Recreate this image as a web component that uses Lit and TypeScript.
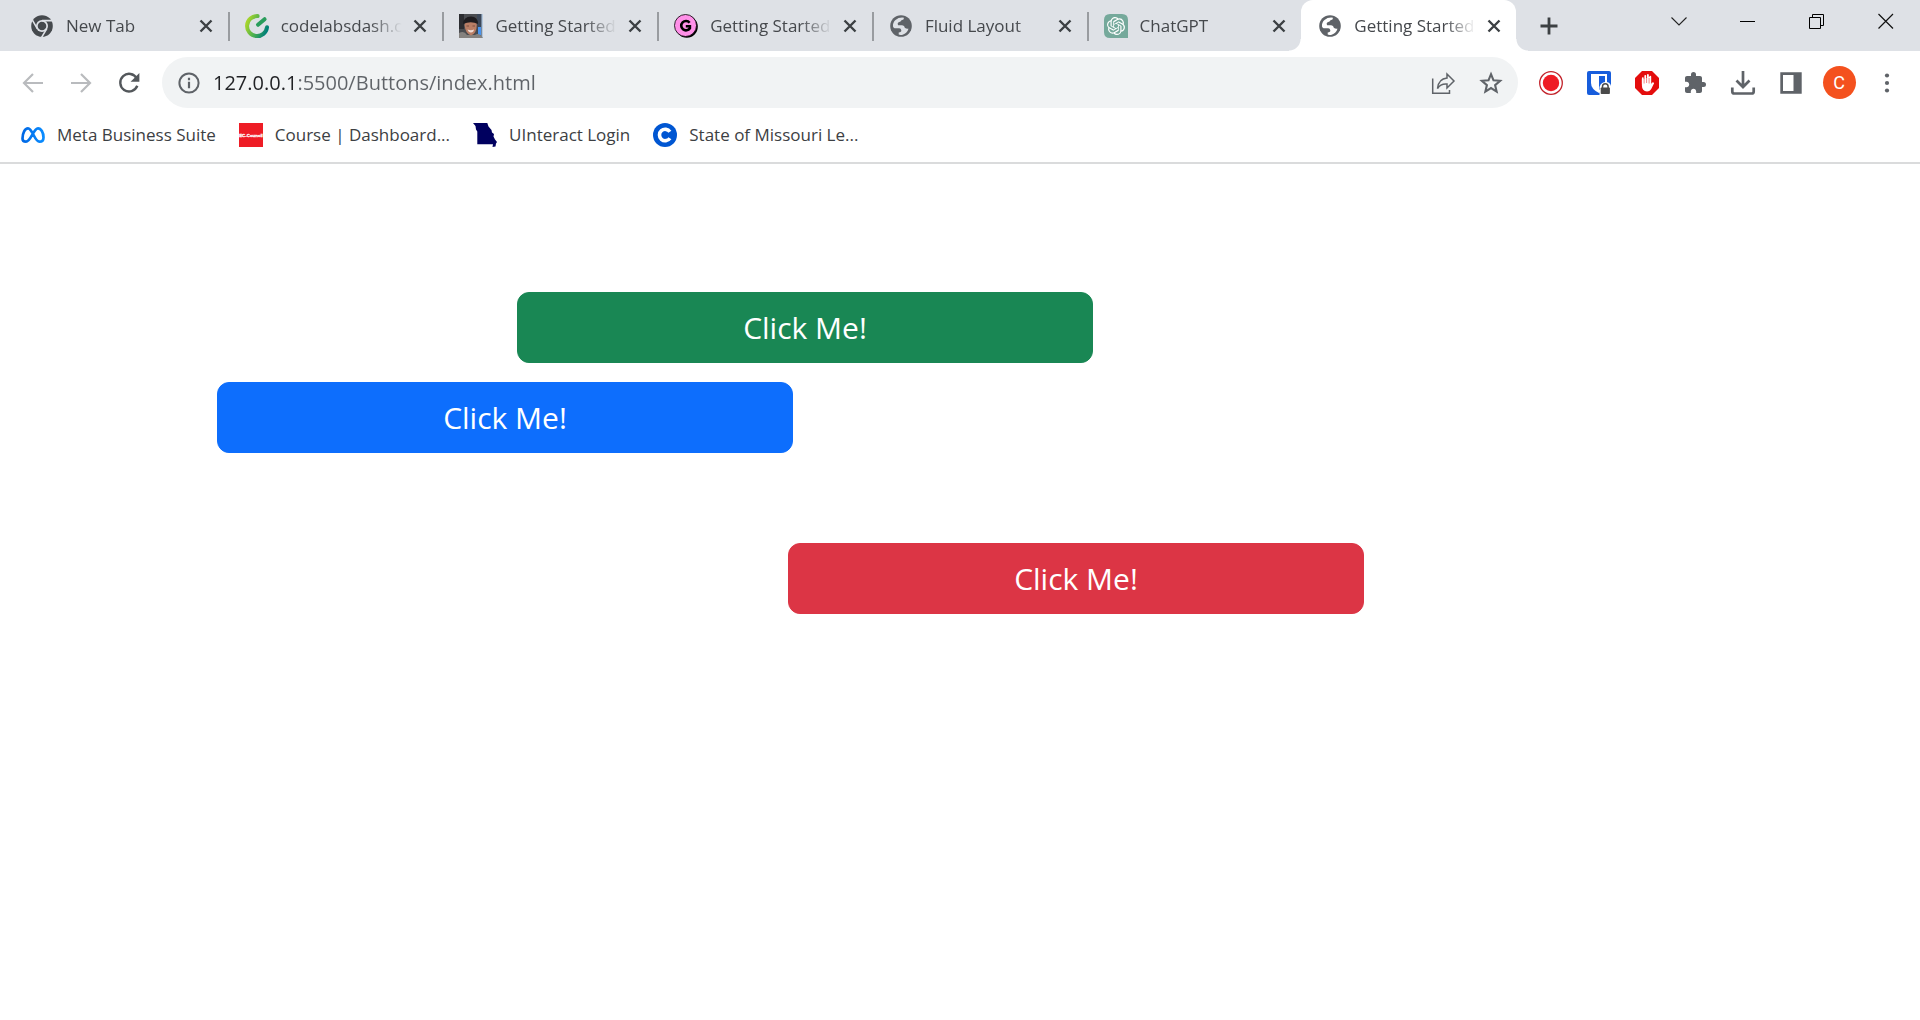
import { LitElement, html, css, svg, type TemplateResult } from "lit";
import { customElement, property, state } from "lit/decorators.js";
import { classMap } from "lit/directives/class-map.js";

type Art = ReturnType<typeof svg>;

/* Every glyph is drawn on a 24 x 24 grid. */
const art: Record<string, Art> = {
  chrome: svg`
    <circle cx="12" cy="12" r="10.8" fill="#45494d"/>
    <circle cx="12" cy="12" r="6" fill="#dee1e6"/>
    <circle cx="12" cy="12" r="4.3" fill="#45494d"/>
    <path d="M12 6.6H22M7.4 14.8L2.4 6.2M16.8 14.6L11.6 23.4" stroke="#dee1e6" stroke-width="1.6" fill="none"/>`,
  codelabs: svg`
    <defs><linearGradient id="lime" x1="0" y1="0.3" x2="1" y2="0.7">
      <stop offset="0" stop-color="#a5d42c"/><stop offset="0.5" stop-color="#4caf50"/><stop offset="1" stop-color="#008078"/>
    </linearGradient></defs>
    <path d="M12.6 2.1A10 10 0 1 0 22 13.2" fill="none" stroke="url(#lime)" stroke-width="4" stroke-linecap="round"/>
    <path d="M13 10.8L19.6 5.2" fill="none" stroke="#2a9d5c" stroke-width="4" stroke-linecap="round"/>`,
  photo: svg`
    <rect width="24" height="24" fill="#4a4c50"/>
    <rect width="5" height="15" fill="#2c2d31"/><rect x="18" width="6" height="24" fill="#3d4858"/>
    <rect x="22.500" width="1.500" height="24" fill="#b4c8de"/>
    <rect x="19" y="13" width="3" height="8" fill="#4a95ef"/>
    <path d="M0 24V19Q5 16 8 21H16Q20 18 24 24Z" fill="#85827f"/>
    <path d="M5.500 11Q6 6 12 6Q18 6 17.800 11Q17.500 20 12 21.500Q6.500 20 5.500 11Z" fill="#b97e65"/>
    <path d="M4 10Q4.500 2.500 12 2.500Q19 2.500 19 10Q12 6.500 4 10Z" fill="#1f1d20"/>
    <path d="M7.500 12H10M13.500 12H16" stroke="#7c5042" stroke-width="1"/>
    <path d="M8.500 15.500Q12 17 15 15.500Q14.500 18.500 12 18.500Q9.500 18.500 8.500 15.500Z" fill="#f0dcd4"/>`,
  gumroad: svg`
    <circle cx="12.800" cy="12.800" r="11" fill="#000"/>
    <circle cx="11.500" cy="11.500" r="11" fill="#ff90e8" stroke="#000" stroke-width="0.800"/>
    <path d="M15.600 8.700A4.700 4.700 0 1 0 15.900 14.200V12.200H11.800" fill="none" stroke="#000" stroke-width="2.600"/>`,
  globe: svg`
    <circle cx="12" cy="12" r="10.800" fill="#5f6368"/>
    <path class="land" d="M4 12.500Q3.600 8.500 6.500 6Q10 3 15 3.700Q15.200 5.800 12.500 6.300Q12 8 9.500 8.300Q7.800 9.600 9.200 11.200H13.200Q15.600 11.600 15.800 13.800Q17 15 19.500 14.800Q18 19.800 13 20.900Q10.500 21.200 9.700 20.600V18.600Q12.600 18.300 12.300 16.300Q12 14.500 10.300 14.300H5.500Q4.300 13.800 4 12.500Z"/>`,
  chatgpt: svg`
    <path d="M6 0H18Q24 0 24 6V24H6Q0 24 0 18V6Q0 0 6 0Z" fill="#75a99b"/>
    <g transform="translate(3 3) scale(0.75)"><path fill="#fff" d="M22.2819 9.8211a5.9847 5.9847 0 0 0-.5157-4.9108 6.0462 6.0462 0 0 0-6.5098-2.9A6.0651 6.0651 0 0 0 4.9807 4.1818a5.9847 5.9847 0 0 0-3.9977 2.9 6.0462 6.0462 0 0 0 .7427 7.0966 5.98 5.98 0 0 0 .511 4.9107 6.051 6.051 0 0 0 6.5146 2.9001A5.9847 5.9847 0 0 0 13.2599 24a6.0557 6.0557 0 0 0 5.7718-4.2058 5.9894 5.9894 0 0 0 3.9977-2.9001 6.0557 6.0557 0 0 0-.7475-7.0729zm-9.022 12.6081a4.4755 4.4755 0 0 1-2.8764-1.0408l.1419-.0804 4.7783-2.7582a.7948.7948 0 0 0 .3927-.6813v-6.7369l2.02 1.1686a.071.071 0 0 1 .038.052v5.5826a4.504 4.504 0 0 1-4.4945 4.4944zm-9.6607-4.1254a4.4708 4.4708 0 0 1-.5346-3.0137l.142.0852 4.783 2.7582a.7712.7712 0 0 0 .7806 0l5.8428-3.3685v2.3324a.0804.0804 0 0 1-.0332.0615L9.74 19.9502a4.4992 4.4992 0 0 1-6.1408-1.6464zM2.3408 7.8956a4.485 4.485 0 0 1 2.3655-1.9728V11.6a.7664.7664 0 0 0 .3879.6765l5.8144 3.3543-2.0201 1.1685a.0757.0757 0 0 1-.071 0l-4.8303-2.7865A4.504 4.504 0 0 1 2.3408 7.872zm16.5963 3.8558L13.1038 8.364 15.1192 7.2a.0757.0757 0 0 1 .071 0l4.8303 2.7913a4.4944 4.4944 0 0 1-.6765 8.1042v-5.6772a.79.79 0 0 0-.407-.667zm2.0107-3.0231l-.142-.0852-4.7735-2.7818a.7759.7759 0 0 0-.7854 0L9.409 9.2297V6.8974a.0662.0662 0 0 1 .0284-.0615l4.8303-2.7866a4.4992 4.4992 0 0 1 6.6802 4.66zM8.3065 12.863l-2.02-1.1638a.0804.0804 0 0 1-.038-.0567V6.0742a4.4992 4.4992 0 0 1 7.3757-3.4537l-.142.0805L8.704 5.459a.7948.7948 0 0 0-.3927.6813zm1.0976-2.3654l2.602-1.4998 2.6069 1.4998v2.9994l-2.5974 1.4997-2.6067-1.4997Z"/></g>`,
  cross: svg`<path d="M6.500 6.500L17.500 17.500M17.500 6.500L6.500 17.500" stroke="#3c4043" stroke-width="2.400" fill="none"/>`,
  plus: svg`<path d="M12 3.500V20.500M3.500 12H20.500" stroke="#3c4043" stroke-width="2.800" fill="none"/>`,
  chevron: svg`<path d="M4.500 8.500L12 16L19.500 8.500" stroke="#222" stroke-width="1.100" fill="none"/>`,
  minimize: svg`<path d="M4 12.500H19" stroke="#000" stroke-width="1" fill="none"/>`,
  restore: svg`<path d="M4.500 8.500H15.500V19.500H4.500ZM7.500 8.500V5.500H18.500V16.500H15.500" stroke="#000" stroke-width="1" fill="none"/>`,
  closeWindow: svg`<path d="M4.500 5L19 19.500M19 5L4.500 19.500" stroke="#111" stroke-width="1.200" fill="none"/>`,
  back: svg`<path d="M22 12H3.500M12 3L3 12L12 21" stroke="#b9bbbe" stroke-width="2.200" fill="none"/>`,
  forward: svg`<path d="M2 12H20.500M12 3L21 12L12 21" stroke="#b9bbbe" stroke-width="2.200" fill="none"/>`,
  reload: svg`<path d="M19.800 7.400A8.800 8.800 0 1 0 20.300 14.800" stroke="#53575b" stroke-width="2.400" fill="none"/><path d="M22.400 2V10.800H13.600Z" fill="#53575b"/>`,
  info: svg`<circle cx="12" cy="12" r="9.600" stroke="#5f6368" stroke-width="2" fill="none"/><path d="M12 10.800V17.200M12 6.800V9.200" stroke="#5f6368" stroke-width="2.200"/>`,
  share: svg`<path d="M1.700 7.500V22.300H18.500V19" stroke="#5f6368" stroke-width="1.500" fill="none"/><path d="M16 3L23 10L16 17V13Q9.500 12.500 6.500 17.500Q7.500 7.800 16 7Z" stroke="#5f6368" stroke-width="1.500" fill="none"/>`,
  star: svg`<path d="M12 3.200L14.500 9.300L21.100 9.800L16.100 14.100L17.600 20.600L12 17.100L6.400 20.600L7.900 14.100L2.900 9.800L9.500 9.300Z" stroke="#5f6368" stroke-width="2.100" fill="none"/>`,
  record: svg`<circle cx="12" cy="12" r="11.300" fill="#fff" stroke="#c2232b" stroke-width="1.300"/><circle cx="12" cy="12" r="8.200" fill="#ee1c25"/>`,
  shield: svg`
    <rect width="24" height="24" rx="2" fill="#175ddc"/>
    <path d="M4 3H20V12Q20 18 12 22Q4 18 4 12Z" fill="#fff"/><path d="M12 5H18V12Q18 16 12 19Z" fill="#175ddc"/>
    <path d="M12.500 24V16Q14 11 19 11Q23 11 24 15V24Z" fill="#fff"/>
    <path d="M15.500 17V15.500A2.800 2.800 0 0 1 21.100 15.500V17" stroke="#4a4a4a" stroke-width="1.500" fill="none"/><rect x="13.700" y="16.500" width="9.200" height="6.500" rx="0.800" fill="#4a4a4a"/>`,
  adblock: svg`
    <path d="M7 0H17L24 7V17L17 24H7L0 17V7Z" fill="#e40d0d"/>
    <path d="M6.900 8.300V14.500Q7 20.200 12 20.500Q15 20.500 16.500 17.500L19.100 12.200Q18.200 10.500 16.700 12.100L15.900 13.200V5.500" fill="#fff"/>
    <path d="M7.800 13V7.200M10.300 12V4.800M12.900 12V4M15.300 13V5.600" stroke="#fff" stroke-width="1.800" stroke-linecap="round"/>
    <path d="M9.100 7V12.500M11.600 6V12M14.100 7V12.500" stroke="#e40d0d" stroke-width="0.500"/>`,
  puzzle: svg`<path fill="#5f6368" d="M20.500 11H19V7c0-1.100-.9-2-2-2h-4V3.500a2.500 2.500 0 0 0-5 0V5H4c-1.100 0-1.990.9-1.990 2v3.800H3.500c1.490 0 2.700 1.210 2.700 2.700s-1.210 2.700-2.700 2.700H2V20c0 1.100.9 2 2 2h3.800v-1.500c0-1.490 1.210-2.700 2.700-2.700s2.700 1.210 2.700 2.700V22H17c1.100 0 2-.9 2-2v-4h1.500a2.500 2.500 0 0 0 0-5z"/>`,
  download: svg`<path d="M12 0V15M5.500 9.500L12 16L18.500 9.500" stroke="#5f6368" stroke-width="2.700" fill="none"/><path d="M1.300 16.500V20.500Q1.300 22.500 3.300 22.500H20.700Q22.700 22.500 22.700 20.500V16.500" stroke="#5f6368" stroke-width="2.700" fill="none"/>`,
  panel: svg`<path fill="#5f6368" fill-rule="evenodd" d="M1.300 1.300H22.700V22.700H1.300ZM4 4V20H14.500V4Z"/>`,
  menu: svg`<circle cx="12" cy="4.500" r="2.100" fill="#5f6368"/><circle cx="12" cy="12" r="2.100" fill="#5f6368"/><circle cx="12" cy="19.500" r="2.100" fill="#5f6368"/>`,
  meta: svg`
    <defs><linearGradient id="metablue"><stop offset="0" stop-color="#0068e5"/><stop offset="1" stop-color="#0a8cff"/></linearGradient></defs>
    <path d="M1.500 15.500C1.500 10 4 5.300 7 5.300C11.500 5.300 13.500 18.700 18.500 18.700C21 18.700 22.500 17.500 22.500 14.500C22.500 9.500 20 5.300 17 5.300C12.500 5.300 9.800 18.700 5 18.700C2.800 18.700 1.500 17.500 1.500 15.500Z" stroke="url(#metablue)" stroke-width="2.700" fill="none"/>`,
  council: svg`<rect width="24" height="24" fill="#ee1c25"/><text x="12" y="13.800" text-anchor="middle" font-family="Liberation Sans Narrow, Liberation Sans, sans-serif" font-weight="700" font-size="4.400" fill="#fff" stroke="#fff" stroke-width="0.300">EC-Council</text>`,
  missouri: svg`<path fill="#00005f" d="M0 0H14.300L15.500 3.500L18.500 7L19 9.500L21 11L20.500 13.500L22 16.500L24 19L23 20.500L22.500 23.500L19.500 24L20 21.300H4.300V8.500L3 6.500L2.500 3Z"/>`,
  coursera: svg`<circle cx="12" cy="12" r="12" fill="#0056d2"/><path d="M16.900 8.800A5.700 5.700 0 1 0 16.900 15.200" stroke="#fff" stroke-width="3.600" fill="none"/>`,
};

@customElement("ui-icon")
class UiIcon extends LitElement {
  @property() name = "";

  static styles = css`
    :host { display: block; flex: none; width: 24px; height: 24px; }
    svg { display: block; width: 100%; height: 100%; overflow: visible; }
    .land { fill: var(--surface, #dee1e6); }
  `;

  render() {
    return html`<svg viewBox="0 0 24 24" aria-hidden="true">${art[this.name]}</svg>`;
  }
}

interface Tab { title: string; icon: string; }

@customElement("tab-strip")
class TabStrip extends LitElement {
  @property({ type: Array }) tabs: Tab[] = [];
  @state() private active = 6;

  static styles = css`
    :host { display: block; background: #dee1e6; }
    .strip { display: flex; height: 51px; padding-left: 13px; }
    .tabs { display: flex; flex: 0 1 1503px; min-width: 0; }
    .tab {
      position: relative; display: flex; align-items: center; box-sizing: border-box;
      flex: 1 1 0; min-width: 0; padding: 0 10px 0 17px;
    }
    .tab.divided::before {
      content: ""; position: absolute; left: 0; top: 12px; width: 2px; height: 29px; background: #999ca0;
    }
    .tab.active { background: #fff; border-radius: 12px 12px 0 0; --surface: #fff; }
    .tab.active::before, .tab.active::after {
      content: ""; position: absolute; bottom: 0; width: 12px; height: 12px;
    }
    .tab.active::before { left: -12px; background: radial-gradient(circle at 0 0, transparent 11px, #fff 12px); }
    .tab.active::after { right: -12px; background: radial-gradient(circle at 100% 0, transparent 11px, #fff 12px); }
    button { border: 0; background: none; padding: 0; font: inherit; color: inherit; cursor: pointer; }
    .select {
      display: flex; align-items: center; gap: 12px; flex: 1; min-width: 0; height: 100%; text-align: left;
      font-size: 17px; line-height: 24px; color: #45484c;
    }
    .title {
      flex: 1; min-width: 0; overflow: hidden; white-space: nowrap;
      mask-image: linear-gradient(90deg, #000 calc(100% - 32px), transparent);
    }
    .close { margin-left: 6px; }
    .new { align-self: center; margin-left: 21px; }
    .controls { display: flex; margin-left: auto; }
    .control { display: grid; place-items: center; width: 69px; height: 42px; }
  `;

  render() {
    return html`
      <div class="strip">
        <div class="tabs">
          ${this.tabs.map((tab, i) => html`
            <div class=${classMap({ tab: true, active: i === this.active, divided: i > 0 && i !== this.active })}>
              <button class="select" @click=${() => (this.active = i)}>
                <ui-icon name=${tab.icon}></ui-icon><span class="title">${tab.title}</span>
              </button>
              <button class="close" aria-label="Close tab"><ui-icon name="cross"></ui-icon></button>
            </div>`)}
        </div>
        <button class="new" aria-label="New tab"><ui-icon name="plus"></ui-icon></button>
        <div class="controls">
          <button class="control" aria-label="Search tabs"><ui-icon name="chevron"></ui-icon></button>
          <button class="control" aria-label="Minimize"><ui-icon name="minimize"></ui-icon></button>
          <button class="control" aria-label="Restore"><ui-icon name="restore"></ui-icon></button>
          <button class="control" aria-label="Close"><ui-icon name="closeWindow"></ui-icon></button>
        </div>
      </div>`;
  }
}

@customElement("tool-bar")
class ToolBar extends LitElement {
  static styles = css`
    :host { display: block; }
    .bar { display: flex; align-items: center; padding: 6px 9px 0; }
    .group { display: flex; }
    button {
      display: grid; place-items: center; width: 48px; height: 48px; padding: 0;
      border: 0; background: none; font: inherit; cursor: pointer;
    }
    .address {
      display: flex; align-items: center; flex: 1; min-width: 0; height: 51px;
      margin: 0 9px; border-radius: 26px; background: #f1f3f4;
    }
    .address button:first-child { width: 51px; padding-left: 2px; }
    .address .group { padding-right: 3px; }
    input {
      flex: 1; min-width: 0; padding: 0; border: 0; outline: 0; height: 32px;
      font: 20px/32px "Open Sans", "Noto Sans", sans-serif; color: transparent;
      background: linear-gradient(90deg, #202124 84px, #5f6368 84px); background-clip: text;
    }
    .avatar {
      display: grid; place-items: center; width: 33px; height: 33px; border-radius: 50%;
      background: #f4511e; color: #fff; font: 18px/33px Roboto, sans-serif;
    }
  `;

  private tool(icon: string, label: string): TemplateResult {
    return html`<button aria-label=${label}><ui-icon name=${icon}></ui-icon></button>`;
  }

  render() {
    return html`
      <div class="bar">
        <div class="group">
          ${this.tool("back", "Back")}${this.tool("forward", "Forward")}${this.tool("reload", "Reload")}
        </div>
        <div class="address">
          ${this.tool("info", "Site information")}
          <input aria-label="Address" spellcheck="false" .value=${"127.0.0.1:5500/Buttons/index.html"}>
          <div class="group">${this.tool("share", "Share")}${this.tool("star", "Bookmark")}</div>
        </div>
        <div class="group">
          ${this.tool("record", "Recorder")}${this.tool("shield", "Passwords")}${this.tool("adblock", "Ad blocker")}
          ${this.tool("puzzle", "Extensions")}${this.tool("download", "Downloads")}${this.tool("panel", "Side panel")}
          <button aria-label="Profile"><span class="avatar">C</span></button>
          ${this.tool("menu", "Menu")}
        </div>
      </div>`;
  }
}

@customElement("bookmark-bar")
class BookmarkBar extends LitElement {
  @property({ type: Array }) items: Tab[] = [];

  static styles = css`
    :host { display: block; border-bottom: 2px solid #dadbdc; }
    nav { display: flex; align-items: center; gap: 23px; height: 54px; padding: 0 21px; }
    a {
      display: flex; align-items: center; gap: 12px; white-space: nowrap;
      color: #3c4043; text-decoration: none; font-size: 17px; line-height: 24px;
    }
  `;

  render() {
    return html`<nav>${this.items.map((b) => html`
      <a href="#"><ui-icon name=${b.icon}></ui-icon><span>${b.title}</span></a>`)}</nav>`;
  }
}

@customElement("app-root")
class AppRoot extends LitElement {
  static styles = css`
    :host {
      display: block; min-height: 100vh; background: #fff;
      font-family: "Open Sans", "Noto Sans", sans-serif;
    }
    main { display: flex; flex-direction: column; align-items: flex-start; padding-top: 128px; }
    .btn {
      width: 30%; padding: 12px 24px; border: 1px solid; border-radius: 12px;
      font: 30px/45px "Open Sans", "Noto Sans", sans-serif; color: #fff; cursor: pointer;
    }
    .success { margin-left: 517px; background: #198754; border-color: #198754; }
    .primary { margin: 19px 0 0 217px; background: #0d6efd; border-color: #0d6efd; }
    .danger { margin: 90px 0 0 788px; background: #dc3545; border-color: #dc3545; }
  `;

  private tabs: Tab[] = [
    { title: "New Tab", icon: "chrome" },
    { title: "codelabsdash.c", icon: "codelabs" },
    { title: "Getting Started", icon: "photo" },
    { title: "Getting Started", icon: "gumroad" },
    { title: "Fluid Layout", icon: "globe" },
    { title: "ChatGPT", icon: "chatgpt" },
    { title: "Getting Started", icon: "globe" },
  ];

  private bookmarks: Tab[] = [
    { title: "Meta Business Suite", icon: "meta" },
    { title: "Course | Dashboard...", icon: "council" },
    { title: "UInteract Login", icon: "missouri" },
    { title: "State of Missouri Le...", icon: "coursera" },
  ];

  render() {
    return html`
      <tab-strip .tabs=${this.tabs}></tab-strip>
      <tool-bar></tool-bar>
      <bookmark-bar .items=${this.bookmarks}></bookmark-bar>
      <main>
        <button class="btn success">Click Me!</button>
        <button class="btn primary">Click Me!</button>
        <button class="btn danger">Click Me!</button>
      </main>`;
  }
}
